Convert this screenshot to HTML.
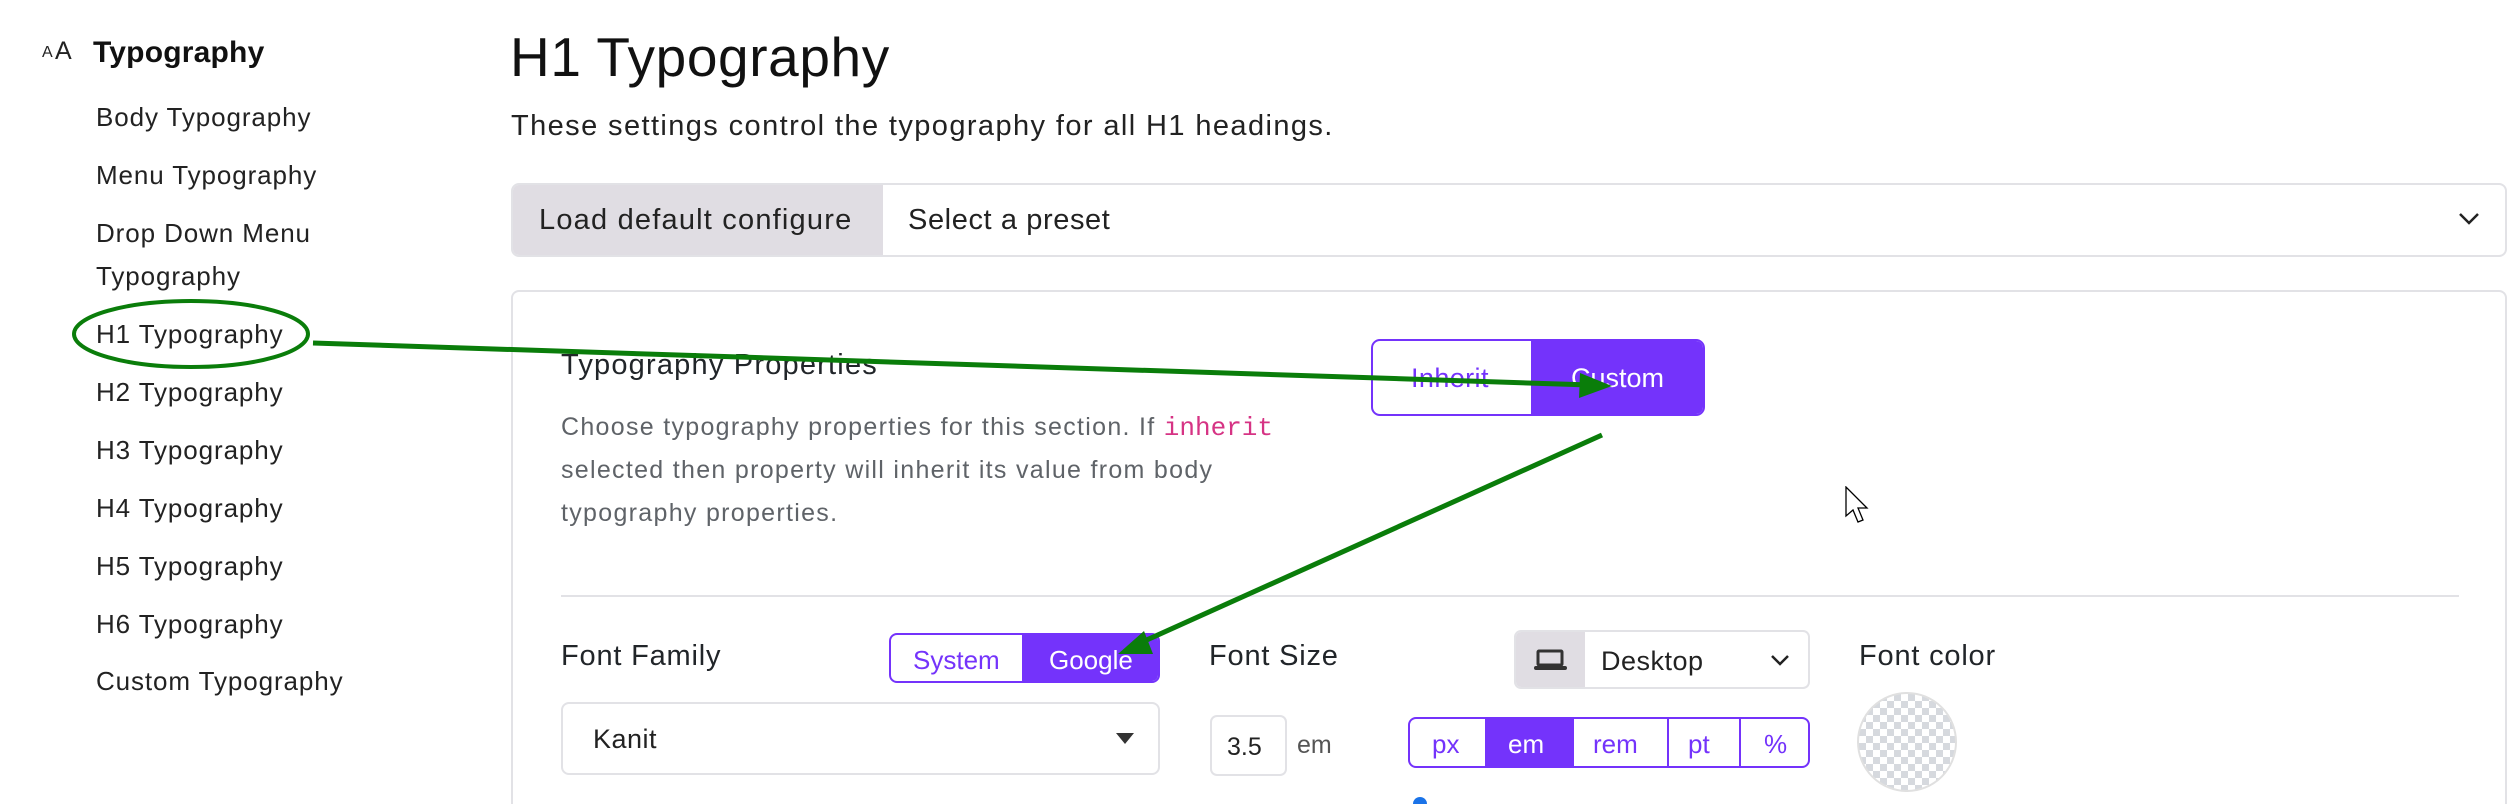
<!DOCTYPE html>
<html><head><meta charset="utf-8">
<style>
*{box-sizing:border-box;margin:0;padding:0}
html,body{width:2519px;height:804px;overflow:hidden;background:#fff}
body{font-family:"Liberation Sans",sans-serif;color:#212529}
#w{position:relative;width:2519px;height:804px;overflow:hidden}
.a{position:absolute;white-space:nowrap}
.side{font-size:26px;color:#222;letter-spacing:0.9px}
.lbl{font-size:29px;color:#212529;letter-spacing:0.8px}
.desc{font-size:25px;color:#5f6368;letter-spacing:1.3px}
.pur{background:#7433fb;color:#fff}
</style></head><body><div id="w">
<div class="a" style="left:42px;top:44px;font-size:16px;color:#222">A</div>
<div class="a" style="left:55px;top:37px;font-size:25px;color:#222">A</div>
<div class="a" style="left:93px;top:36px;font-size:30px;font-weight:bold;color:#111;letter-spacing:0.2px">Typography</div>
<div class="a side" style="left:96px;top:102px">Body Typography</div>
<div class="a side" style="left:96px;top:160px">Menu Typography</div>
<div class="a side" style="left:96px;top:218px">Drop Down Menu</div>
<div class="a side" style="left:96px;top:261px">Typography</div>
<div class="a side" style="left:96px;top:319px">H1 Typography</div>
<div class="a side" style="left:96px;top:377px">H2 Typography</div>
<div class="a side" style="left:96px;top:435px">H3 Typography</div>
<div class="a side" style="left:96px;top:493px">H4 Typography</div>
<div class="a side" style="left:96px;top:551px">H5 Typography</div>
<div class="a side" style="left:96px;top:609px">H6 Typography</div>
<div class="a side" style="left:96px;top:666px">Custom Typography</div>

<div class="a" style="left:510px;top:25px;font-size:55px;color:#111;letter-spacing:0.6px">H1 Typography</div>
<div class="a" style="left:511px;top:110px;font-size:29px;color:#222;letter-spacing:1.4px">These settings control the typography for all H1 headings.</div>

<div class="a" style="left:511px;top:183px;width:1996px;height:74px;border:2px solid #e2e2e6;border-radius:8px;overflow:hidden">
 <div class="a" style="left:0;top:0;width:370px;height:100%;background:#e0dde3"></div>
 <div class="a" style="left:26px;top:19px;font-size:29px;color:#222;letter-spacing:1.2px">Load default configure</div>
 <div class="a" style="left:395px;top:19px;font-size:29px;color:#222;letter-spacing:0.6px">Select a preset</div>
 <svg class="a" style="left:1945px;top:26px" width="22" height="16"><path d="M2 3 L11 12 L20 3" stroke="#222" stroke-width="2.5" fill="none"/></svg>
</div>

<div class="a" style="left:511px;top:290px;width:1996px;height:514px;border:2px solid #e2e2e6;border-bottom:none;border-radius:8px 8px 0 0"></div>
<div class="a lbl" style="left:561px;top:349px;letter-spacing:1.2px">Typography Properties</div>
<div class="a desc" style="left:561px;top:413px">Choose typography properties for this section. If <span style="font-family:'Liberation Mono',monospace;color:#d63384;font-size:26px;letter-spacing:0">inherit</span></div>
<div class="a desc" style="left:561px;top:456px">selected then property will inherit its value from body</div>
<div class="a desc" style="left:561px;top:499px">typography properties.</div>

<div class="a" style="left:1371px;top:339px;width:334px;height:77px;border:2px solid #7433fb;border-radius:9px;overflow:hidden">
 <div class="a pur" style="left:158px;top:0;width:180px;height:100%"></div>
 <div class="a" style="left:38px;top:22px;font-size:27px;color:#7433fb;letter-spacing:0.4px">Inherit</div>
 <div class="a" style="left:198px;top:22px;font-size:27px;color:#fff">Custom</div>
</div>

<svg class="a" style="left:1845px;top:486px" width="28" height="42"><path d="M1 1 L1 30 L8 24 L13 36 L18 34 L13 22 L22 22 Z" fill="#fff" stroke="#000" stroke-width="1.3"/></svg>

<div class="a" style="left:561px;top:595px;width:1898px;height:2px;background:#e2e2e6"></div>

<div class="a lbl" style="left:561px;top:640px">Font Family</div>
<div class="a" style="left:889px;top:633px;width:271px;height:50px;border:2px solid #7433fb;border-radius:8px;overflow:hidden">
 <div class="a pur" style="left:131px;top:0;width:140px;height:100%"></div>
 <div class="a" style="left:22px;top:10px;font-size:26px;color:#7433fb">System</div>
 <div class="a" style="left:158px;top:10px;font-size:26px;color:#fff">Google</div>
</div>
<div class="a" style="left:561px;top:702px;width:599px;height:73px;border:2px solid #e2e2e6;border-radius:8px">
 <div class="a" style="left:30px;top:20px;font-size:27px;color:#222;letter-spacing:0.5px">Kanit</div>
 <svg class="a" style="left:553px;top:29px" width="18" height="12"><path d="M0 0 L18 0 L9 11 Z" fill="#333"/></svg>
</div>

<div class="a lbl" style="left:1209px;top:640px">Font Size</div>
<div class="a" style="left:1514px;top:630px;width:296px;height:59px;border:2px solid #e2e2e6;border-radius:7px;overflow:hidden">
 <div class="a" style="left:0;top:0;width:69px;height:100%;background:#e0dde3"></div>
 <svg class="a" style="left:17px;top:17px" width="36" height="24"><rect x="5" y="2" width="24" height="14" rx="1" fill="none" stroke="#333" stroke-width="3"/><rect x="1" y="17" width="33" height="4" rx="2" fill="#333"/></svg>
 <div class="a" style="left:85px;top:14px;font-size:27px;color:#222;letter-spacing:0.5px">Desktop</div>
 <svg class="a" style="left:254px;top:22px" width="20" height="14"><path d="M2 2 L10 10 L18 2" stroke="#222" stroke-width="2.5" fill="none"/></svg>
</div>
<div class="a" style="left:1210px;top:715px;width:77px;height:61px;border:2px solid #e2e2e6;border-radius:7px">
 <div class="a" style="left:15px;top:16px;font-size:25px;color:#222">3.5</div>
</div>
<div class="a" style="left:1297px;top:731px;font-size:25px;color:#555">em</div>
<div class="a" style="left:1408px;top:717px;width:402px;height:51px;border:2px solid #7433fb;border-radius:8px;overflow:hidden;font-size:26px;color:#7433fb">
 <div class="a pur" style="left:75px;top:0;width:87px;height:100%"></div>
 <div class="a" style="left:162px;top:0;width:2px;height:100%;background:#7433fb"></div>
 <div class="a" style="left:257px;top:0;width:2px;height:100%;background:#7433fb"></div>
 <div class="a" style="left:329px;top:0;width:2px;height:100%;background:#7433fb"></div>
 <div class="a" style="left:22px;top:10px">px</div>
 <div class="a" style="left:98px;top:10px;color:#fff">em</div>
 <div class="a" style="left:183px;top:10px">rem</div>
 <div class="a" style="left:278px;top:10px">pt</div>
 <div class="a" style="left:354px;top:10px">%</div>
</div>

<div class="a lbl" style="left:1859px;top:640px">Font color</div>
<div class="a" style="left:1857px;top:692px;width:100px;height:100px;border-radius:50%;border:2px solid #e0e0e0;background-color:#fff;background-image:linear-gradient(45deg,#d6d9de 25%,transparent 25%,transparent 75%,#d6d9de 75%),linear-gradient(45deg,#d6d9de 25%,transparent 25%,transparent 75%,#d6d9de 75%);background-size:14px 14px;background-position:0 0,7px 7px"></div>
<div class="a" style="left:1413px;top:797px;width:14px;height:7px;border-radius:7px 7px 0 0;background:#1a73e8"></div>

<svg class="a" style="left:0;top:0" width="2519" height="804">
 <ellipse cx="191" cy="334" rx="117" ry="33" fill="none" stroke="#0a7d0a" stroke-width="4"/>
 <line x1="313" y1="343" x2="1590" y2="385" stroke="#0a7d0a" stroke-width="5"/>
 <path d="M1612 386 L1580 373 L1579 398 Z" fill="#0a7d0a"/>
 <line x1="1602" y1="435" x2="1140" y2="643" stroke="#0a7d0a" stroke-width="5"/>
 <path d="M1118 654 L1144 631 L1153 654 Z" fill="#0a7d0a"/>
</svg>
</div></body></html>
